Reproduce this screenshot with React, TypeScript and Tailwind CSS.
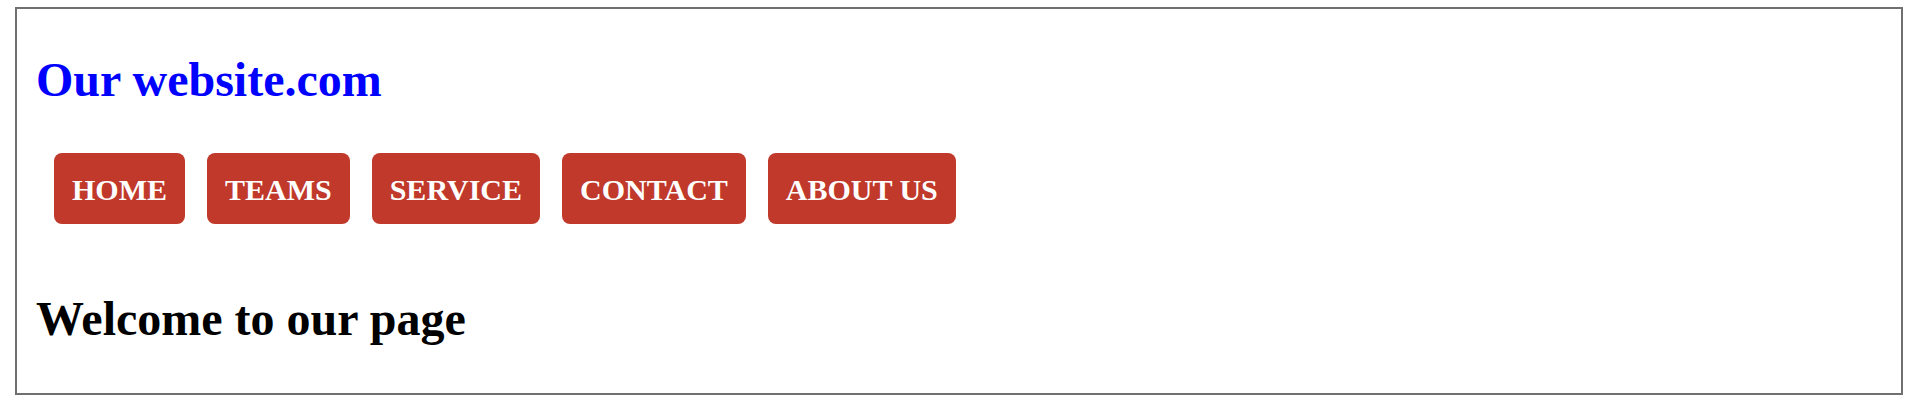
import React from "react";

const navItems = ["HOME", "TEAMS", "SERVICE", "CONTACT", "ABOUT US"];

const App: React.FC = () => {
  return (
    <main
      className="w-full min-h-[410px] bg-white pt-[7px] pl-[15px] pr-[14px]"
      style={{ fontFamily: '"Liberation Serif", "Times New Roman", serif' }}
    >
      <div className="h-[388px] border-2 border-[#707070] pl-[19px]">
        {/* Header */}
        <h1 className="mt-[47px] text-[48px] leading-[48px] font-bold text-[#0000ff]">
          Our website.com
        </h1>

        {/* Nav */}
        <nav className="mt-[49px] ml-[18px] flex gap-[22px]">
          {navItems.map((item) => (
            <a
              key={item}
              href="#"
              className="block rounded-[8px] bg-[#c0392b] px-[18px] pt-[19px] pb-[17px] text-[30px] leading-[35px] font-bold text-white"
            >
              {item}
            </a>
          ))}
        </nav>

        {/* Content */}
        <h2 className="mt-[71px] text-[48px] leading-[48px] font-bold text-black">
          Welcome to our page
        </h2>
      </div>
    </main>
  );
};

export default App;
